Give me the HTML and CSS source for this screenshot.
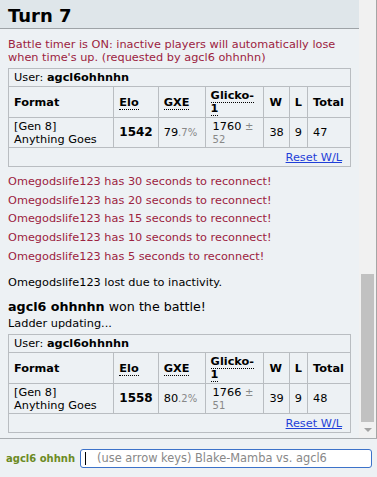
FILE: index.html
```html
<!DOCTYPE html>
<html>
<head>
    <meta charset="utf-8">
    <title>Battle log</title>
    <link rel="stylesheet" href="styles.css">
</head>
<body>
<div class="room">
    <div class="log-wrap">
        <div class="log">
            <h2 class="turn">Turn 7</h2>
            <div class="chat">
                <div class="msg error timer">Battle timer is ON: inactive players will automatically lose when time's up. (requested by agcl6 ohhnhn)</div>

                <table class="ladder">
                    <tr><td colspan="7" class="user">User: <strong>agcl6ohhnhn</strong></td></tr>
                    <tr class="head">
                        <th class="c-format">Format</th>
                        <th class="c-elo"><abbr>Elo</abbr></th>
                        <th class="c-gxe"><abbr>GXE</abbr></th>
                        <th class="c-glicko"><abbr>Glicko-<br>1</abbr></th>
                        <th class="c-w">W</th>
                        <th class="c-l">L</th>
                        <th class="c-total">Total</th>
                    </tr>
                    <tr>
                        <td>[Gen 8]<br>Anything Goes</td>
                        <td class="elo">1542</td>
                        <td>79<small>.7%</small></td>
                        <td class="glicko">1760 <small>±<br>52</small></td>
                        <td>38</td>
                        <td>9</td>
                        <td>47</td>
                    </tr>
                    <tr><td colspan="7" class="reset"><a href="#">Reset W/L</a></td></tr>
                </table>

                <div class="msg error line first">Omegodslife123 has 30 seconds to reconnect!</div>
                <div class="msg error line">Omegodslife123 has 20 seconds to reconnect!</div>
                <div class="msg error line">Omegodslife123 has 15 seconds to reconnect!</div>
                <div class="msg error line">Omegodslife123 has 10 seconds to reconnect!</div>
                <div class="msg error line">Omegodslife123 has 5 seconds to reconnect!</div>

                <div class="msg lost">Omegodslife123 lost due to inactivity.</div>
                <div class="win"><strong>agcl6 ohhnhn</strong> won the battle!</div>
                <div class="msg updating">Ladder updating...</div>

                <table class="ladder">
                    <tr><td colspan="7" class="user">User: <strong>agcl6ohhnhn</strong></td></tr>
                    <tr class="head">
                        <th class="c-format">Format</th>
                        <th class="c-elo"><abbr>Elo</abbr></th>
                        <th class="c-gxe"><abbr>GXE</abbr></th>
                        <th class="c-glicko"><abbr>Glicko-<br>1</abbr></th>
                        <th class="c-w">W</th>
                        <th class="c-l">L</th>
                        <th class="c-total">Total</th>
                    </tr>
                    <tr>
                        <td>[Gen 8]<br>Anything Goes</td>
                        <td class="elo">1558</td>
                        <td>80<small>.2%</small></td>
                        <td class="glicko">1766 <small>±<br>51</small></td>
                        <td>39</td>
                        <td>9</td>
                        <td>48</td>
                    </tr>
                    <tr><td colspan="7" class="reset"><a href="#">Reset W/L</a></td></tr>
                </table>
            </div>
        </div>
        <div class="scrollbar">
            <div class="thumb"></div>
            <div class="arrow"></div>
        </div>
    </div>
    <div class="controls">
        <strong class="me">agcl6 ohhnh</strong>
        <div class="textbox"><span class="caret"></span>(use arrow keys) Blake-Mamba vs. agcl6</div>
    </div>
</div>
</body>
</html>
```

FILE: styles.css
```css
body{
    margin: 0;
    background: #edf1f4;
    font-family: "DejaVu Sans", Verdana, sans-serif;
    font-size: 11.3px;
    color: #000;
}
.room{
    width: 377px;
    height: 477px;
    display: flex;
    flex-direction: column;
}
.log-wrap{
    display: flex;
    height: 438px;
    border-bottom: 1px solid #a9adb1;
}
.log{
    width: 359px;
    overflow: hidden;
}
.turn{
    margin: 0;
    height: 28px;
    padding: 0 8px;
    background: #dfe6ea;
    border-bottom: 1px solid #9ea3a7;
    font-size: 18px;
    line-height: 31px;
    font-weight: bold;
}
.chat{
    padding: 9px 8px 0;
}
.msg{
    line-height: 13px;
}
.error{
    color: #9c2240;
}
.timer{
    margin-bottom: 4px;
}
.line{
    padding: 3px 0 2.7px;
}
.line.first{
    margin-top: 5px;
}
.lost{
    margin-top: 11px;
}
.win{
    margin-top: 9px;
    font-size: 12.7px;
    line-height: 17px;
}
.updating{
    margin-top: 2px;
}
.ladder{
    border-collapse: collapse;
    width: 343px;
    margin-top: 4px;
    font-size: 11.3px;
}
.ladder td, .ladder th{
    border: 1px solid #b9bdc1;
    padding: 0 5px;
    text-align: left;
    line-height: 13px;
}
.ladder th{
    height: 30px;
    font-weight: bold;
}
.ladder td{
    height: 29px;
}
.ladder .user{
    height: 17px;
}
.ladder .reset{
    height: 18px;
    text-align: right;
    padding-right: 8px;
}
.reset a{
    color: #1f3fd8;
}
abbr{
    text-decoration: none;
    border-bottom: 1px dotted #000;
}
.c-format{ width: 96px; }
.c-elo{ width: 32px; }
.c-gxe{ width: 36px; }
.c-glicko{ width: 48px; }
.c-w{ width: 14px; }
.c-l{ width: 6px; }
.c-total{ width: 32px; }
.elo{
    font-weight: bold;
    font-size: 12px;
}
small{
    font-size: 10px;
    color: #888;
}
.glicko{
    padding-left: 7px !important;
}
.scrollbar{
    width: 17px;
    background: #f1f1f1;
    border-right: 1px solid #a5a5a5;
    display: flex;
    flex-direction: column;
    align-items: center;
}
.thumb{
    margin-top: 274px;
    width: 13px;
    height: 148px;
    background: #c1c1c1;
}
.arrow{
    margin-top: 6px;
    width: 0;
    height: 0;
    border-left: 4px solid transparent;
    border-right: 4px solid transparent;
    border-top: 4px solid #a3a3a3;
}
.controls{
    flex: 1;
    display: flex;
    align-items: center;
    padding: 0 5px 0 6px;
    gap: 5px;
}
.me{
    color: #6b8a23;
    font-size: 10px;
}
.textbox{
    flex: 1;
    height: 17px;
    background: #fff;
    border: 1px solid #3c72c9;
    border-radius: 3px;
    color: #888;
    font-size: 11.4px;
    line-height: 17px;
    padding-left: 4px;
    display: flex;
    align-items: center;
    white-space: nowrap;
    overflow: hidden;
}
.caret{
    width: 1px;
    height: 13px;
    background: #000;
    margin-right: 11px;
}
```
